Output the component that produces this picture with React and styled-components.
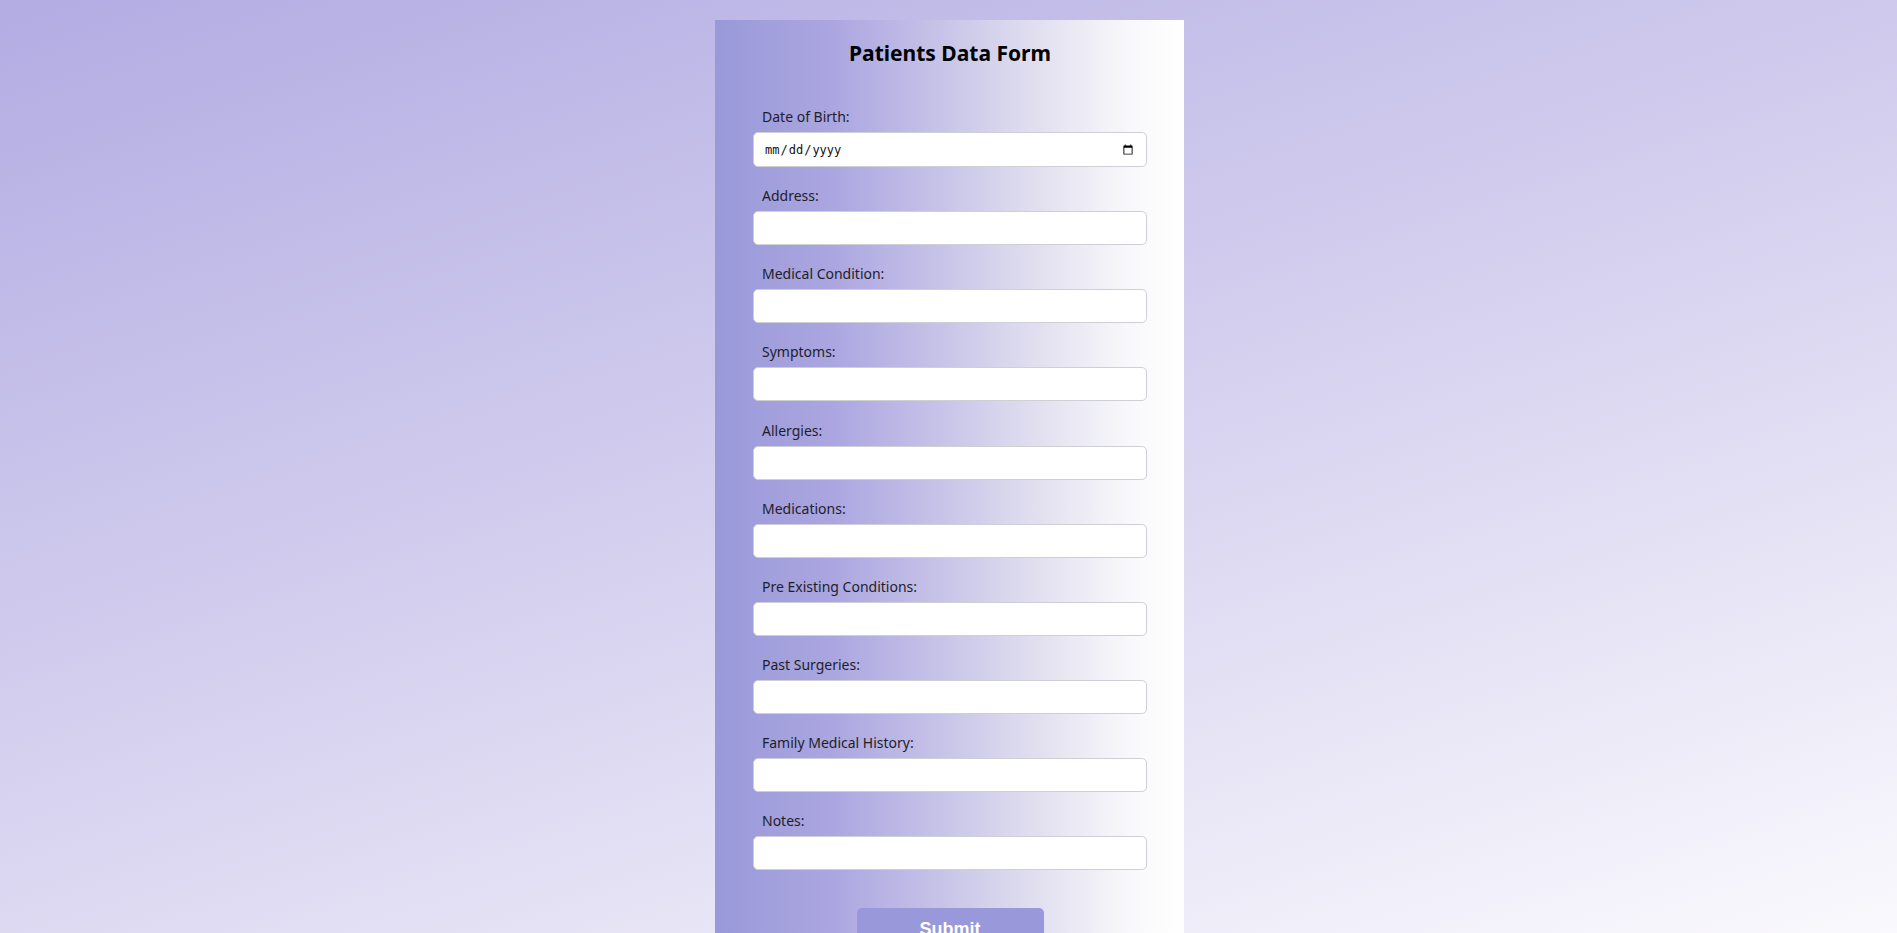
import React from 'react'
import styled, { createGlobalStyle } from 'styled-components'

const GlobalStyle = createGlobalStyle`
  html, body {
    margin: 0;
    padding: 0;
  }
  body {
    font-family: "Noto Sans", "Open Sans", sans-serif;
    background: linear-gradient(162deg, #b2ace3 0%, #d6d1ef 50%, #faf9fd 100%);
    background-attachment: fixed;
    min-height: 100vh;
  }
`;

const fields = [
  { id: 'dob', label: 'Date of Birth:', type: 'date' },
  { id: 'address', label: 'Address:' },
  { id: 'condition', label: 'Medical Condition:' },
  { id: 'symptoms', label: 'Symptoms:' },
  { id: 'allergies', label: 'Allergies:' },
  { id: 'medications', label: 'Medications:' },
  { id: 'preexisting', label: 'Pre Existing Conditions:' },
  { id: 'surgeries', label: 'Past Surgeries:' },
  { id: 'family', label: 'Family Medical History:' },
  { id: 'notes', label: 'Notes:' },
];

const Page = styled.div`
  display: flex;
  justify-content: center;
  padding: 20px 0 0 2px;
`;

const Panel = styled.form`
  box-sizing: border-box;
  width: 469px;
  padding: 19px 37px 40px 38px;
  background: linear-gradient(to right, #9999d9 0%, #aba6e0 25%, #c3bfe7 45%, #e3e1f0 70%, #f8f8fb 88%, #ffffff 100%);
`;

const Title = styled.h2`
  margin: 0 0 39px 0;
  text-align: center;
  font-size: 21px;
  line-height: 29px;
  font-weight: 700;
  color: #000;
`;

const Field = styled.div`
  display: flex;
  flex-direction: column;
  margin-bottom: 19.15px;
`;

const Label = styled.label`
  padding-left: 9px;
  margin-bottom: 5px;
  font-size: 14px;
  line-height: 20px;
  color: #1e1e2a;
`;

const Input = styled.input`
  box-sizing: border-box;
  width: 100%;
  height: ${p => (p.type === 'date' ? '35px' : '34px')};
  padding: 0 10px;
  border: 1px solid #cfcfd6;
  border-radius: 5px;
  background: #fff;
  font-family: ${p => (p.type === 'date' ? '"DejaVu Sans Mono", monospace' : '"Noto Sans", sans-serif')};
  font-size: 12px;
  color: #111;
  outline: none;
`;

const Actions = styled.div`
  display: flex;
  justify-content: center;
  padding-top: 19px;
`;

const SubmitButton = styled.button`
  width: 187px;
  height: 42px;
  border: none;
  border-radius: 5px;
  background: #9898da;
  color: #fff;
  font-family: "Liberation Sans", Arial, sans-serif;
  font-size: 18px;
  font-weight: 700;
  cursor: pointer;
`;

export default function App() {
  return (
    <>
      <GlobalStyle />
      <Page>
        <Panel onSubmit={e => e.preventDefault()}>
          <Title>Patients Data Form</Title>
          {fields.map(f => (
            <Field key={f.id}>
              <Label htmlFor={f.id}>{f.label}</Label>
              <Input id={f.id} type={f.type || 'text'} />
            </Field>
          ))}
          <Actions>
            <SubmitButton type="submit">Submit</SubmitButton>
          </Actions>
        </Panel>
      </Page>
    </>
  );
}
